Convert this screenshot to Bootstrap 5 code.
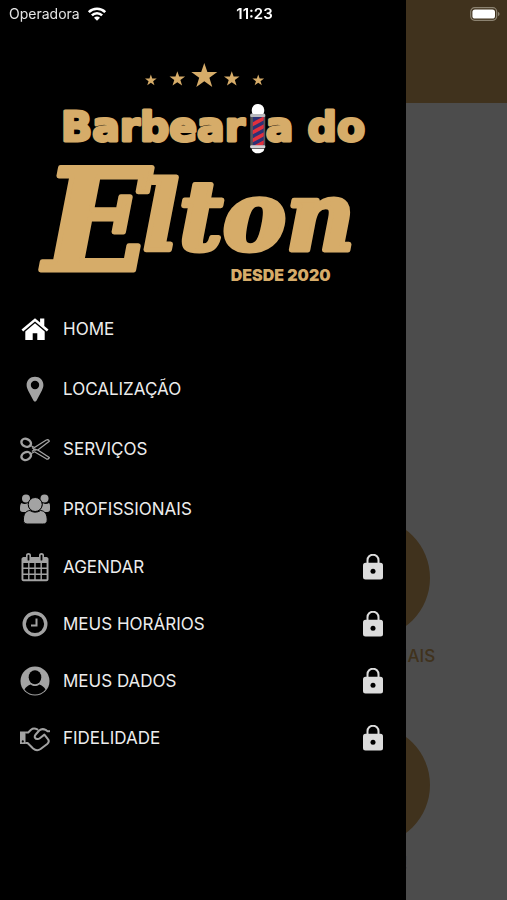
<!DOCTYPE html>
<html lang="pt-BR">
<head>
<meta charset="utf-8">
<meta name="viewport" content="width=device-width, initial-scale=1">
<title>Barbearia do Elton</title>
<link rel="stylesheet" href="https://cdn.jsdelivr.net/npm/bootstrap@5.3.0/dist/css/bootstrap.min.css">
<style>
  :root { --gold: #d5a761; }
  body { font-family: Inter, "Liberation Sans", sans-serif; background: #fff; }
  .app-header { height: 103px; background: var(--gold); }
  .hero-space { height: 415px; }
  .tiles { padding: 0 32px; }
  .tile { height: 207px; color: var(--gold); font-size: 17px; font-weight: 500; line-height: 36px; }
  .tile-disc { width: 120px; height: 120px; background: var(--gold); }
  .offcanvas-backdrop.show { opacity: .7; }
  .offcanvas.side-menu { --bs-offcanvas-width: 80%; --bs-offcanvas-bg: #000; border: 0; color: #ededed; }
  .status-bar { z-index: 1100; height: 28px; padding: 0 7px 0 9px; font-size: 14px; line-height: 28px; color: #e4e4e4; }
  .carrier { gap: 7px; }
  .clock { font-size: 15px; font-weight: 600; color: #fff; }
  .menu-link { height: 60px; padding: 0 20px; gap: 13px; font-size: 17px; color: #ededed; }
  .menu-link.locked { height: 57px; }
  .menu-link span { padding-top: 2px; }
  .menu-link svg { color: #a3a3a3; flex: none; }
  .menu-link.active svg { color: #fff; }
  .menu-link svg.padlock { color: #dcdcdc; margin-left: auto; margin-right: 3px; }
</style>
<script src="https://cdn.jsdelivr.net/npm/bootstrap@5.3.0/dist/js/bootstrap.bundle.min.js"></script>
</head>
<body class="overflow-hidden">

<div class="status-bar fixed-top d-flex align-items-center">
  <div class="col d-flex align-items-center carrier">
    <span>Operadora</span>
    <svg width="20" height="16" viewBox="0 0 20 16" fill="none" stroke="#fff" stroke-width="2.6" aria-label="Wi-Fi"><path d="M1.8 6.2a11.6 11.6 0 0 1 16.4 0M4.9 9.4a7.2 7.2 0 0 1 10.2 0"/><path d="M10 14.8 7 11.8a4.2 4.2 0 0 1 6 0z" fill="#fff" stroke="none"/></svg>
  </div>
  <span class="clock">11:23</span>
  <div class="col d-flex justify-content-end">
    <svg width="30" height="14" viewBox="0 0 30 14" aria-label="Bateria"><rect x=".7" y=".7" width="26" height="12.6" rx="4" fill="none" stroke="#8c8371" stroke-width="1.2"/><rect x="2.4" y="2.4" width="22.6" height="9.2" rx="2.6" fill="#fff"/><path d="M28 5c2 .5 2 3.500 0 4z" fill="#8c8371"/></svg>
  </div>
</div>

<header class="app-header"></header>
<main>
  <div class="hero-space"></div>
  <div class="container-fluid tiles">
    <div class="row row-cols-2 text-center">
      <div class="tile"><div class="tile-disc rounded-circle mx-auto"></div>SERVIÇOS</div>
      <div class="tile"><div class="tile-disc rounded-circle mx-auto"></div>PROFISSIONAIS</div>
      <div class="tile"><div class="tile-disc rounded-circle mx-auto"></div>LOCAL</div>
      <div class="tile"><div class="tile-disc rounded-circle mx-auto"></div>AGENDE!</div>
    </div>
  </div>
</main>

<aside class="offcanvas offcanvas-start show side-menu" tabindex="-1" aria-label="Menu">
  <svg class="w-100 flex-shrink-0" viewBox="0 0 406 299" fill="#d6ac69" role="img" aria-label="Barbearia do Elton, desde 2020">
    <defs>
      <path id="star" d="M0-13 3.100-4H13L5.100 1.800 8 11 0 5.400-8 11-5.100 1.800-13-4H-3.100z"/>
      <clipPath id="tube"><rect x="253" y="117" width="11" height="29"/></clipPath>
    </defs>
    <use href="#star" transform="translate(204.500 76)"/>
    <use href="#star" transform="translate(177.500 79) scale(.6)"/>
    <use href="#star" transform="translate(232 79) scale(.6)"/>
    <use href="#star" transform="translate(151 80.500) scale(.45)"/>
    <use href="#star" transform="translate(258.500 80.500) scale(.45)"/>
    <g font-family="'DejaVu Sans', sans-serif" font-weight="700" font-size="41" stroke="#d6ac69" stroke-width="3" stroke-linejoin="round">
      <text x="61" y="141">Barbear</text>
      <text x="266" y="141">a do</text>
    </g>
    <g>
      <rect x="250.500" y="113" width="15" height="35" rx="2" fill="#55555a"/>
      <rect x="252" y="104" width="12.500" height="13" rx="6" fill="#fff"/>
      <rect x="250.500" y="114" width="15" height="3" rx="1" fill="#b9b9bd"/>
      <g clip-path="url(#tube)"><path fill="#2c3276" d="M253 117h11v29h-11z"/><path stroke="#e0303e" stroke-width="3.600" d="m252 125 13-7m-13 15 13-7m-13 15 13-7m-13 15 13-7"/></g>
      <rect x="250.500" y="145.500" width="15" height="3" rx="1" fill="#d2d2d5"/>
      <path d="M252 149h12.500c0 6-12.500 6-12.500 0z" fill="#fff"/>
    </g>
    <g font-family="'DejaVu Serif', serif" font-style="italic" font-weight="700" stroke="#d6ac69" stroke-width="5" stroke-linejoin="round">
      <text x="44" y="270" font-size="140">E</text>
      <text x="143" y="250" font-size="95">lton</text>
    </g>
    <text x="231" y="281" font-family="Inter, sans-serif" font-weight="900" font-size="16">DESDE 2020</text>
  </svg>

  <nav class="nav flex-column flex-nowrap">
    <a class="menu-link active d-flex align-items-center text-decoration-none" href="#home">
      <svg width="30" height="30" viewBox="0 0 30 30" fill="currentColor"><path d="M15 4.200 1.500 15.600l1.700 1.900L15 7.500l11.800 10 1.700-1.900-4.200-3.600V4.500h-4.200v4z"/><path d="M15 9.300 5.300 17.500V26h7.400v-6.800h4.600V26h7.400v-8.500z"/></svg>
      <span>HOME</span></a>
    <a class="menu-link d-flex align-items-center text-decoration-none" href="#local">
      <svg width="30" height="30" viewBox="0 0 30 30" fill="currentColor"><path fill-rule="evenodd" d="M15 2.800c-4.800 0-8.400 3.500-8.400 8.200 0 2 .7 3.700 1.500 5.400l5.300 10.200c.8 1.400 2.400 1.400 3.200 0l5.300-10.200c.8-1.700 1.500-3.400 1.500-5.400 0-4.700-3.600-8.200-8.400-8.200zm0 4a4.200 4.200 0 1 1 0 8.400 4.200 4.200 0 0 1 0-8.400z"/></svg>
      <span>LOCALIZAÇÃO</span></a>
    <a class="menu-link d-flex align-items-center text-decoration-none" href="#servicos">
      <svg width="30" height="30" viewBox="0 0 30 30" fill="none" stroke="currentColor" stroke-linejoin="round"><g stroke-width="2.400"><ellipse cx="6.200" cy="8.800" rx="4.900" ry="3.800" transform="rotate(24 6.200 8.800)"/><ellipse cx="6.200" cy="22" rx="4.900" ry="3.800" transform="rotate(-24 6.200 22)"/></g><path stroke-width="1.300" d="m10.500 11.500 4 2L26.300 6c1.500-.6 2.700 0 3 1.300L17.800 16l11.500 7.500c-.3 1.300-1.500 1.900-3 1.300l-11.800-7-4 2.200m1.500-6.500 2.500 1.900-2.500 2.100m2.500-2.100 3.300.6"/><circle cx="15" cy="15.700" r=".8"/></svg>
      <span>SERVIÇOS</span></a>
    <a class="menu-link d-flex align-items-center text-decoration-none" href="#profissionais">
      <svg width="30" height="30" viewBox="0 0 30 30" fill="currentColor"><circle cx="6" cy="4.500" r="4"/><circle cx="24.500" cy="4.500" r="4"/><path d="M1.500 9c1.800 1.200 4.300 1.300 6.300.1.100 3.400 1.300 6 3.600 7.600-1.600.3-3 .8-4 1.300H2.800C.9 18 0 17 0 15.200 0 12.500.2 10.100 1.500 9zM29 9c-1.800 1.200-4.300 1.300-6.300.1-.1 3.400-1.300 6-3.600 7.600 1.600.3 3 .8 4 1.300h4.100c1.900 0 2.800-1 2.800-2.800 0-2.700.3-5.100-1-6.200z"/><g stroke="#000" stroke-width="1"><circle cx="15.200" cy="10.500" r="7"/><path d="M10 16.500c3 2.200 7.500 2.200 10.500 0 4.800.3 6.700 4.300 6.700 9.400 0 3-1.600 4.100-4.400 4.100H7.800c-2.800 0-4.400-1.100-4.400-4.100 0-5.100 1.900-9.100 6.600-9.400z"/></g></svg>
      <span>PROFISSIONAIS</span></a>
    <a class="menu-link locked d-flex align-items-center text-decoration-none" href="#agendar">
      <svg width="30" height="30" viewBox="0 0 30 30" fill="currentColor"><path fill-rule="evenodd" d="M3.500 5H6V3.200C6 .2 11 .2 11 3.200V5h8V3.200c0-3 5-3 5 0V5h2.500c1 0 2 1 2 2v20.200c0 1-1 2-2 2h-23c-1 0-2-1-2-2V7c0-1 1-2 2-2zM7.600 3.400v4.500c0 .8 1.800.8 1.800 0V3.400c0-.9-1.800-.9-1.800 0zm13 0v4.500c0 .8 1.800.8 1.800 0V3.400c0-.9-1.800-.9-1.800 0zM3.400 11v4.600h4.700V11zm6.100 0v4.600h4.800V11zm6.200 0v4.600h4.800V11zm6.200 0v4.600h4.700V11zM3.400 17v4.500h4.700V17zm6.100 0v4.500h4.800V17zm6.200 0v4.500h4.800V17zm6.200 0v4.500h4.700V17zM3.400 22.900v4.400h4.700v-4.400zm6.100 0v4.400h4.800v-4.400zm6.200 0v4.400h4.800v-4.400zm6.200 0v4.400h4.700v-4.400z"/></svg>
      <span>AGENDAR</span>
      <svg class="padlock" width="20" height="26" viewBox="0 0 20 26"><path d="M4.500 10V6.200a5.500 5.500 0 0 1 11 0V10" fill="none" stroke="currentColor" stroke-width="2"/><rect y="8.700" width="20" height="16.800" rx="2.500" fill="currentColor"/><circle cx="10" cy="17.200" r="2.500" fill="#000"/></svg></a>
    <a class="menu-link locked d-flex align-items-center text-decoration-none" href="#horarios">
      <svg width="30" height="30" viewBox="0 0 30 30" fill="none" stroke="currentColor"><circle cx="15" cy="15" r="10.800" stroke-width="3.400"/><path stroke-width="2" d="M16.500 9.500v7h-5.500"/></svg>
      <span>MEUS HORÁRIOS</span>
      <svg class="padlock" width="20" height="26" viewBox="0 0 20 26"><path d="M4.500 10V6.200a5.500 5.500 0 0 1 11 0V10" fill="none" stroke="currentColor" stroke-width="2"/><rect y="8.700" width="20" height="16.800" rx="2.500" fill="currentColor"/><circle cx="10" cy="17.200" r="2.500" fill="#000"/></svg></a>
    <a class="menu-link locked d-flex align-items-center text-decoration-none" href="#dados">
      <svg width="30" height="30" viewBox="0 0 30 30"><circle cx="15" cy="15" r="14.500" fill="currentColor"/><path d="M4.500 23.500c1.300-2.600 3.500-4.200 6.200-5.100 2.600 2.200 6 2.200 8.600 0 2.700.9 4.900 2.500 6.200 5.100C22.900 26.800 19.200 28.500 15 28.500S7.100 26.800 4.500 23.500z"/><ellipse cx="15" cy="11.300" rx="6.300" ry="7"/></svg>
      <span>MEUS DADOS</span>
      <svg class="padlock" width="20" height="26" viewBox="0 0 20 26"><path d="M4.500 10V6.200a5.500 5.500 0 0 1 11 0V10" fill="none" stroke="currentColor" stroke-width="2"/><rect y="8.700" width="20" height="16.800" rx="2.500" fill="currentColor"/><circle cx="10" cy="17.200" r="2.500" fill="#000"/></svg></a>
    <a class="menu-link locked d-flex align-items-center text-decoration-none" href="#fidelidade">
      <svg width="30" height="30" viewBox="0 0 30 30" fill="none" stroke="currentColor" stroke-width="2" stroke-linejoin="round" stroke-linecap="round"><path fill="currentColor" fill-rule="evenodd" stroke="none" d="M0 8.500h5.500V21H0zm2.800 8.800a1.100 1.100 0 1 0 0 2.200 1.100 1.100 0 0 0 0-2.200z"/><path d="M6 9.500h2.200L11 6.700c1.500-1.200 4.500-1.200 6.300-.3M6 20h1.600l5.500 5.500c2.300 2 5 2.200 7.500.5l6.600-5c1.700-1.500 2-3.200.7-4.800l-3.500-4.600-4.600 3.600c-1.500 1.200-3.800 1.100-4.700-.3-.8-1.200-.4-2.200.6-3.400l3.500-4c1.800-1.500 4.500-1.600 6.500-.6l1.800 1.300H29.500"/></svg>
      <span>FIDELIDADE</span>
      <svg class="padlock" width="20" height="26" viewBox="0 0 20 26"><path d="M4.500 10V6.200a5.500 5.500 0 0 1 11 0V10" fill="none" stroke="currentColor" stroke-width="2"/><rect y="8.700" width="20" height="16.800" rx="2.500" fill="currentColor"/><circle cx="10" cy="17.200" r="2.500" fill="#000"/></svg></a>
  </nav>
</aside>
</body>
</html>
